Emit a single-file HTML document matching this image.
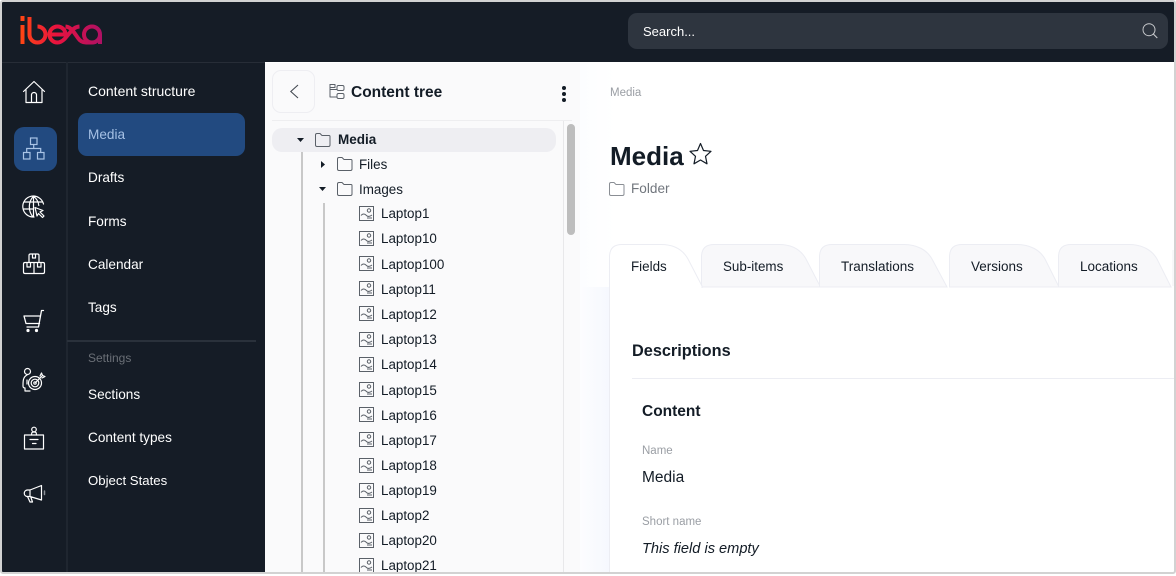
<!DOCTYPE html>
<html lang="en"><head><meta charset="utf-8"><title>Media</title>
<style>
html,body{margin:0;padding:0;background:#fff}
body{width:1176px;height:574px;overflow:hidden;position:relative;font-family:"Liberation Sans","Noto Sans CJK JP",sans-serif;color:#131c26}
.a{position:absolute}
.t{position:absolute;white-space:nowrap;line-height:20px;height:20px}
.n{left:88px;color:#fff;font-size:13.6px}
.r{font-size:13.4px;color:#131c26}
svg{position:absolute;overflow:visible}
.ic{fill:none;stroke:#fff;stroke-width:1.2;stroke-linecap:round;stroke-linejoin:round}
.g{fill:none;stroke:#5a6068;stroke-width:1;stroke-linejoin:round;stroke-linecap:round}
</style></head><body>
<div class="a" style="left:2px;top:2px;width:1172px;height:60px;background:#151c26"></div>
<div class="a" style="left:2px;top:62px;width:263px;height:510px;background:#151c26"></div>
<div class="a" style="left:2px;top:62px;width:263px;height:1px;background:#272d37"></div>
<div class="a" style="left:66px;top:62px;width:2px;height:510px;background:#1f2630"></div>
<div class="a" style="left:265px;top:63px;width:315px;height:509px;background:#fafafb"></div>
<div class="a" style="left:580px;top:63px;width:36px;height:224px;background:linear-gradient(90deg,#fcfdff,#fff)"></div>
<div class="a" style="left:580px;top:287px;width:29px;height:285px;background:linear-gradient(90deg,#fcfdff,#f6f8fe)"></div>

<!-- logo -->
<svg width="100" height="40" style="left:10px;top:10px" viewBox="0 0 100 40">
<defs><linearGradient id="lg" gradientUnits="userSpaceOnUse" x1="10" y1="0" x2="92" y2="0"><stop offset="0" stop-color="#ff4713"/><stop offset=".45" stop-color="#e8123f"/><stop offset="1" stop-color="#ae1164"/></linearGradient></defs>
<g fill="none" stroke="url(#lg)" stroke-width="4">
<path d="M12.500 6 V11 M12.500 15 V34"/>
<path d="M19.500 7 V24.500 A8 8 0 1 0 27.500 16.500"/>
<path d="M39 24.500 H55.500 A8 8 0 1 0 47.500 32.500 C50.500 32.500 52.500 31 54.500 29 L60 22.500 C62.500 19.500 65 16.800 69.500 16.500"/>
<path d="M55.500 16.500 C59 16.800 61 18.500 63 21 L68 28 C70 31 72.500 32.500 76 32.500 H82"/>
<circle cx="82" cy="24.500" r="8"/>
<path d="M90 24.500 V34"/>
</g></svg>

<!-- search -->
<div class="a" style="left:628px;top:13px;width:540px;height:36px;background:#2e353f;border-radius:9px"></div>
<div class="t" style="left:643px;top:22px;font-size:13px;color:#fff">Search...</div>
<svg width="18" height="18" style="left:1141px;top:22px" viewBox="0 0 18 18"><circle cx="8" cy="7.700" r="6" fill="none" stroke="#c9cbce" stroke-width="1"/><path d="M12.300 12 L16.300 16" stroke="#c9cbce" stroke-width="1.100"/></svg>

<!-- rail -->
<div class="a" style="left:14px;top:127px;width:43px;height:44px;background:#224a80;border-radius:10px"></div>
<svg class="ic" width="24" height="24" style="left:22px;top:80px" viewBox="0 0 24 24"><path d="M1.500 11.500 L12 1.500 L22.500 11.500 M4 10 V22.500 H9.500 V15 A2.500 2.500 0 0 1 14.500 15 V22.500 H20 V10 M9.500 22.500 H14.500"/></svg>
<svg width="24" height="24" style="left:22px;top:137px" viewBox="0 0 24 24" fill="none" stroke="#a9c4e6" stroke-width="1.200"><rect x="8.500" y="1" width="6.500" height="6.500"/><rect x="1.500" y="15.500" width="6.500" height="6.500"/><rect x="15.500" y="15.500" width="6.500" height="6.500"/><path d="M11.700 7.500 V11.500 M4.700 15.500 V11.500 H18.700 V15.500"/></svg>
<svg class="ic" width="24" height="24" style="left:22px;top:195px" viewBox="0 0 24 24"><path d="M21.500 9 A10.500 10.500 0 1 0 12 22 M11.500 1.200 C6 7 6 16 11 22 M11.500 1.200 C15 4 16.500 7 16.800 10.500 M2 7 H20.500 M1.300 14 H11 M11.500 1.500 V21.500"/><path d="M13 12.500 L21 15.500 L18 17 L22 21 L20.500 22.500 L16.500 18.500 L15 21 Z" fill="#151c26"/></svg>
<svg class="ic" width="24" height="24" style="left:22px;top:252px" viewBox="0 0 24 24"><path d="M7 10.500 V3.500 Q7 2 8.500 2 H15.500 Q17 2 17 3.500 V10.500 M1.500 12 Q1.500 10.500 3 10.500 H21 Q22.500 10.500 22.500 12 V20 Q22.500 21.500 21 21.500 H3 Q1.500 21.500 1.500 20 Z M12 10.500 V21.500 M10.500 2 V6 H13.500 V2 M5 10.500 V15 H8.500 V10.500 M15.500 10.500 V15 H19 V10.500"/></svg>
<svg class="ic" width="24" height="24" style="left:22px;top:309px" viewBox="0 0 24 24"><path d="M21.500 1.500 H19.500 L16.500 18 H5 M2 7 H18.500 M2 7 L4 14.500 H17.500" stroke-width="1.300"/><circle cx="6" cy="21.500" r="1" fill="#fff"/><circle cx="14.500" cy="21.500" r="1" fill="#fff"/></svg>
<svg class="ic" width="24" height="26" style="left:22px;top:367px" viewBox="0 0 24 26"><circle cx="5.500" cy="4.500" r="3"/><path d="M5 8 C1 10 1 14 1 19 Q1 21 3 21 V24 H8 M5 13 V17"/><circle cx="13" cy="16" r="6.500"/><circle cx="13" cy="16" r="3.800"/><circle cx="13" cy="16" r="1.200"/><path d="M13.500 15.500 L20 9 M18 9 L19.500 6 L20.500 8.500 L23 9.500 L20 11"/></svg>
<svg class="ic" width="24" height="24" style="left:22px;top:426px" viewBox="0 0 24 24"><rect x="2.500" y="9" width="19" height="14"/><path d="M8 13.500 H16 M10.500 17.500 H14"/><circle cx="12" cy="3.500" r="2.300"/><path d="M9.500 9 C9.500 6.500 10 6 12 6 C14 6 14.500 6.500 14.500 9"/></svg>
<svg class="ic" width="24" height="20" style="left:22px;top:484px" viewBox="0 0 24 20"><path d="M8 6 L19.500 1.500 V16 L8 12.500 H5 A3.300 3.300 0 0 1 5 6 Z M8 6 V12.500 M5.500 12.500 L8 18 H10.500 L8.800 13"/><path d="M22.500 7 V10.500" stroke="#8a8f96" stroke-width="1.500"/></svg>

<!-- nav -->
<div class="a" style="left:78px;top:113px;width:167px;height:43px;background:#224a80;border-radius:9px"></div>
<div class="t n" style="top:81px;font-size:14px">Content structure</div>
<div class="t n" style="top:125px;color:#a5c0e4">Media</div>
<div class="t n" style="top:168px">Drafts</div>
<div class="t n" style="top:212px">Forms</div>
<div class="t n" style="top:255px">Calendar</div>
<div class="t n" style="top:298px">Tags</div>
<div class="a" style="left:67px;top:340px;width:189px;height:2px;background:#2a313b"></div>
<div class="t" style="left:88px;top:348px;font-size:12px;color:#6a6f76">Settings</div>
<div class="t n" style="top:385px">Sections</div>
<div class="t n" style="top:428px">Content types</div>
<div class="t n" style="top:471px;font-size:13.200px">Object States</div>

<!-- tree header -->
<div class="a" style="left:272px;top:70px;width:41px;height:41px;border:1px solid #eeeef2;border-radius:9px"></div>
<svg width="10" height="16" style="left:289px;top:84px" viewBox="0 0 10 16"><path d="M9 1 L1.800 7.500 L9 14" fill="none" stroke="#444a52" stroke-width="1.100"/></svg>
<svg class="g" width="16" height="16" style="left:329px;top:84px" viewBox="0 0 16 16"><path d="M1 .5 V13 H7.500 M1 5.500 H7.500"/><path d="M1 .5 H6 V3.500 H1"/><rect x="8" y="1.500" width="7" height="5" rx="1.500"/><rect x="8" y="9.500" width="7" height="5" rx="1.500"/></svg>
<div class="t" style="left:351px;top:83px;font-size:15.500px;font-weight:700">Content tree</div>
<div class="a" style="left:562px;top:86px;width:4px;height:4px;border-radius:50%;background:#131c26"></div>
<div class="a" style="left:562px;top:92px;width:4px;height:4px;border-radius:50%;background:#131c26"></div>
<div class="a" style="left:562px;top:98px;width:4px;height:4px;border-radius:50%;background:#131c26"></div>
<div class="a" style="left:272px;top:120px;width:300px;height:1px;background:#eeeef0"></div>

<!-- tree -->
<div class="a" style="left:272px;top:128px;width:284px;height:24px;background:#eeeef2;border-radius:10px"></div>
<div class="a" style="left:563px;top:121px;width:1px;height:451px;background:#e8e8ea"></div>
<div class="a" style="left:567px;top:124px;width:8px;height:111px;background:#bdbdbd;border-radius:4px"></div>
<div class="a" style="left:301px;top:152px;width:1.500px;height:420px;background:#c8c8c8"></div>
<div class="a" style="left:323px;top:203px;width:1.500px;height:369px;background:#c8c8c8"></div>

<svg width="8" height="5" style="left:297px;top:138px"><path d="M0 0 H7 L3.500 4 Z" fill="#131c26"/></svg>
<svg width="5" height="8" style="left:321px;top:161px"><path d="M0 0 V7 L4 3.500 Z" fill="#131c26"/></svg>
<svg width="8" height="5" style="left:319px;top:187px"><path d="M0 0 H7 L3.500 4 Z" fill="#131c26"/></svg>

<svg class="g" width="16" height="14" style="left:315px;top:133px" viewBox="0 0 16 14"><path d="M.5 2 Q.5 .5 2 .5 H5 L7 2.500 H14 Q15 2.500 15 3.500 V12 Q15 13.500 13.500 13.500 H2 Q.5 13.500 .5 12 Z"/></svg>
<svg class="g" width="16" height="14" style="left:337px;top:157px" viewBox="0 0 16 14"><path d="M.5 2 Q.5 .5 2 .5 H5 L7 2.500 H14 Q15 2.500 15 3.500 V12 Q15 13.500 13.500 13.500 H2 Q.5 13.500 .5 12 Z"/></svg>
<svg class="g" width="16" height="14" style="left:337px;top:182px" viewBox="0 0 16 14"><path d="M.5 2 Q.5 .5 2 .5 H5 L7 2.500 H14 Q15 2.500 15 3.500 V12 Q15 13.500 13.500 13.500 H2 Q.5 13.500 .5 12 Z"/></svg>
<div class="t" style="left:338px;top:130px;font-size:13.500px;font-weight:700">Media</div>
<div class="t r" style="left:359px;top:155px">Files</div>
<div class="t r" style="left:359px;top:180px">Images</div>

<svg width="0" height="0"><defs><g id="im"><rect x=".5" y=".5" width="14" height="14" fill="none" stroke="#5a6068"/><circle cx="10" cy="4.500" r="1.700" fill="none" stroke="#5a6068"/><path d="M2 9.500 C4 7 6 8 7.500 9.500 C9 11 11 10.500 13 9 M8 12 H13" fill="none" stroke="#5a6068"/></g></defs></svg>
<svg width="15" height="15" style="left:359px;top:206px"><use href="#im"/></svg><div class="t r" style="left:381px;top:204px">Laptop1</div>
<svg width="15" height="15" style="left:359px;top:231px"><use href="#im"/></svg><div class="t r" style="left:381px;top:229px">Laptop10</div>
<svg width="15" height="15" style="left:359px;top:256px"><use href="#im"/></svg><div class="t r" style="left:381px;top:255px">Laptop100</div>
<svg width="15" height="15" style="left:359px;top:281px"><use href="#im"/></svg><div class="t r" style="left:381px;top:280px">Laptop11</div>
<svg width="15" height="15" style="left:359px;top:306px"><use href="#im"/></svg><div class="t r" style="left:381px;top:305px">Laptop12</div>
<svg width="15" height="15" style="left:359px;top:332px"><use href="#im"/></svg><div class="t r" style="left:381px;top:330px">Laptop13</div>
<svg width="15" height="15" style="left:359px;top:357px"><use href="#im"/></svg><div class="t r" style="left:381px;top:355px">Laptop14</div>
<svg width="15" height="15" style="left:359px;top:382px"><use href="#im"/></svg><div class="t r" style="left:381px;top:381px">Laptop15</div>
<svg width="15" height="15" style="left:359px;top:407px"><use href="#im"/></svg><div class="t r" style="left:381px;top:406px">Laptop16</div>
<svg width="15" height="15" style="left:359px;top:432px"><use href="#im"/></svg><div class="t r" style="left:381px;top:431px">Laptop17</div>
<svg width="15" height="15" style="left:359px;top:458px"><use href="#im"/></svg><div class="t r" style="left:381px;top:456px">Laptop18</div>
<svg width="15" height="15" style="left:359px;top:483px"><use href="#im"/></svg><div class="t r" style="left:381px;top:481px">Laptop19</div>
<svg width="15" height="15" style="left:359px;top:508px"><use href="#im"/></svg><div class="t r" style="left:381px;top:506px">Laptop2</div>
<svg width="15" height="15" style="left:359px;top:533px"><use href="#im"/></svg><div class="t r" style="left:381px;top:531px">Laptop20</div>
<svg width="15" height="15" style="left:359px;top:558px"><use href="#im"/></svg><div class="t r" style="left:381px;top:556px">Laptop21</div>

<!-- main -->
<div class="t" style="left:610px;top:83px;font-size:11.500px;color:#9a9ea4">Media</div>
<div class="t" style="left:610px;top:141px;height:30px;line-height:30px;font-size:26px;font-weight:700">Media</div>
<svg width="24" height="24" style="left:689px;top:142px" viewBox="0 0 24 24"><path d="M11.500 1.500 L14.500 8.500 L22 9.300 L16.500 14.300 L18 21.800 L11.500 18 L5 21.800 L6.500 14.300 L1 9.300 L8.500 8.500 Z" fill="none" stroke="#131c26" stroke-width="1.200" stroke-linejoin="round"/></svg>
<svg width="16" height="14" style="left:609px;top:182px" viewBox="0 0 16 14"><path d="M.5 2 Q.5 .5 2 .5 H5 L7 2.500 H14 Q15 2.500 15 3.500 V12 Q15 13.500 13.500 13.500 H2 Q.5 13.500 .5 12 Z" fill="none" stroke="#8a8e94"/></svg>
<div class="t" style="left:631px;top:179px;font-size:13.600px;color:#71767d">Folder</div>

<!-- tabs -->
<svg width="566" height="44" style="left:609px;top:244px" viewBox="0 0 566 44">
<g stroke="#ecedf3" stroke-width="1">
<path fill="#f8f8fa" d="M92.500 43 V13 Q92.500 .5 105 .5 H170 C183 .5 192 6 197 15 L211.500 43 Z"/>
<path fill="#f8f8fa" d="M210.500 43 V13 Q210.500 .5 223 .5 H295 C308 .5 318 6 323 15 L338 43 Z"/>
<path fill="#f8f8fa" d="M340.500 43 V13 Q340.500 .5 353 .5 H408 C421 .5 431 6 436 15 L450 43 Z"/>
<path fill="#f8f8fa" d="M449.500 43 V13 Q449.500 .5 462 .5 H520 C533 .5 543 6 548 15 L562 43 Z"/>
<path fill="#fff" d="M.5 44 V13 Q.5 .5 13 .5 H52 C65 .5 74 6 79 15 L93 42 V44"/>
</g></svg>
<div class="a" style="left:1172px;top:250px;width:2px;height:36px;background:#f8f8fa"></div>
<div class="t" style="left:631px;top:257px;font-size:13.400px">Fields</div>
<div class="t" style="left:723px;top:257px;font-size:13.400px">Sub-items</div>
<div class="t" style="left:841px;top:257px;font-size:13.500px">Translations</div>
<div class="t" style="left:971px;top:257px;font-size:13.500px">Versions</div>
<div class="t" style="left:1080px;top:257px;font-size:13.500px">Locations</div>
<div class="a" style="left:609px;top:287px;width:1px;height:285px;background:#ecedf3"></div>

<div class="t" style="left:632px;top:341px;font-size:16.300px;font-weight:700">Descriptions</div>
<div class="a" style="left:632px;top:378px;width:542px;height:1px;background:#ecedf3"></div>
<div class="t" style="left:642px;top:402px;font-size:15.500px;font-weight:700">Content</div>
<div class="t" style="left:642px;top:441px;font-size:11.500px;color:#9a9ea4">Name</div>
<div class="t" style="left:642px;top:468px;font-size:15.500px">Media</div>
<div class="t" style="left:642px;top:512px;font-size:11.500px;color:#9a9ea4">Short name</div>
<div class="t" style="left:642px;top:539px;font-size:14.600px;font-style:italic">This field is empty</div>

<!-- frame -->
<div class="a" style="left:0;top:0;width:1172px;height:570px;border:2px solid #d2d2d2;border-radius:3px"></div>
</body></html>
